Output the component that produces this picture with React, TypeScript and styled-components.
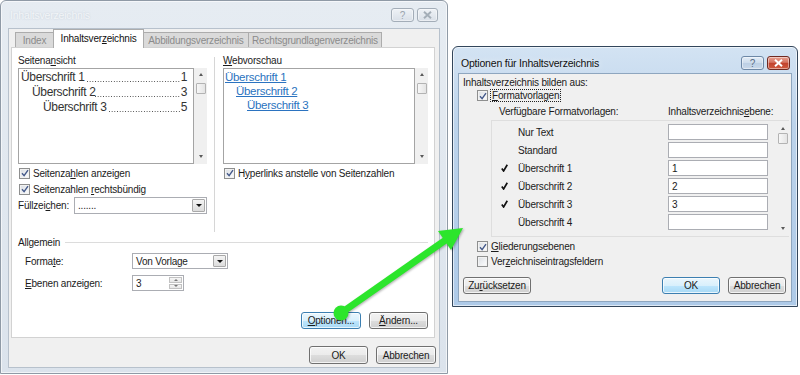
import styled, { createGlobalStyle } from 'styled-components';

const GlobalStyle = createGlobalStyle`
  html, body {
    margin: 0;
    padding: 0;
    background: #ffffff;
  }
  body {
    font-family: "Liberation Sans", Arial, sans-serif;
    font-size: 10px;
    letter-spacing: -0.2px;
    color: #1b1b1b;
  }
  * {
    box-sizing: border-box;
  }
`;

const Desktop = styled.div`
  position: relative;
  width: 800px;
  height: 375px;
  overflow: hidden;
  background: #ffffff;
`;

type WinProps = { $x: number; $y: number; $w: number; $h: number; $active?: boolean };

const Window = styled.div<WinProps>`
  position: absolute;
  left: ${(p) => p.$x}px;
  top: ${(p) => p.$y}px;
  width: ${(p) => p.$w}px;
  height: ${(p) => p.$h}px;
  display: flex;
  flex-direction: column;
  padding: 0 ${(p) => (p.$active ? 5 : 7)}px ${(p) => (p.$active ? 4 : 5)}px;
  border: 1px solid ${(p) => (p.$active ? '#33465b' : '#8f9aa6')};
  border-radius: 6px 6px 0 0;
  background: ${(p) =>
    p.$active
      ? 'linear-gradient(to bottom, #d3e3f3 0%, #bcd3eb 30%, #aecae8 100%)'
      : 'linear-gradient(to bottom, #e6ecf2 0%, #dbe3ec 100%)'};
  box-shadow: inset 0 0 0 1px rgba(255, 255, 255, 0.6);
`;

const TitleBar = styled.div<{ $active?: boolean }>`
  height: ${(p) => (p.$active ? 26 : 27)}px;
  flex-shrink: 0;
  display: flex;
  align-items: center;
  padding: ${(p) => (p.$active ? '6px 0 0 3px' : '1px 0 0 2px')};
`;

const Title = styled.span<{ $active?: boolean }>`
  flex: 1;
  font-size: 10.5px;
  color: ${(p) => (p.$active ? '#111' : '#f2f5f8')};
  text-shadow: ${(p) => (p.$active ? '0 0 6px rgba(255,255,255,0.9)' : '0 0 2px #c3ccd6')};
`;

const CaptionButtons = styled.div`
  display: flex;
  gap: 3px;
  margin-right: 2px;
`;

const CaptionButton = styled.span<{ $close?: boolean; $active?: boolean; $w: number }>`
  width: ${(p) => p.$w}px;
  height: 14px;
  display: flex;
  align-items: center;
  justify-content: center;
  border-radius: 3px;
  font-size: 10px;
  border: 1px solid
    ${(p) => (!p.$active ? '#a3adb8' : p.$close ? '#6f2a22' : '#6d88a6')};
  color: ${(p) => (p.$active ? '#5a6e85' : '#9aa4ae')};
  background: ${(p) =>
    !p.$active
      ? 'linear-gradient(to bottom, #eef2f6, #d9e0e8)'
      : p.$close
        ? 'linear-gradient(to bottom, #e9a192 0%, #d5725f 45%, #c2412c 50%, #cf5a3f 100%)'
        : 'linear-gradient(to bottom, #e3edf7 0%, #cddcec 50%, #bccfe4 51%, #c9d9ea 100%)'};
  box-shadow: inset 0 0 0 1px rgba(255, 255, 255, 0.45);
`;

const Client = styled.div<{ $active?: boolean }>`
  flex: 1;
  display: flex;
  flex-direction: column;
  background: #f0f0f0;
  border: 1px solid ${(p) => (p.$active ? '#8ea6bf' : '#b7c1cc')};
`;

const U = styled.u`
  text-decoration: underline;
  text-underline-offset: 1px;
`;

/* ---------- tabs ---------- */

const TabStrip = styled.div`
  display: flex;
  align-items: flex-end;
  height: 19px;
  margin-bottom: -1px;
  padding-left: 6px;
  position: relative;
  z-index: 2;
`;

const Tab = styled.div<{ $active?: boolean; $w: number }>`
  width: ${(p) => p.$w}px;
  height: ${(p) => (p.$active ? 19 : 15)}px;
  margin-bottom: ${(p) => (p.$active ? 0 : 1)}px;
  margin-left: -1px;
  display: flex;
  align-items: center;
  justify-content: center;
  padding-bottom: ${(p) => (p.$active ? 1 : 0)}px;
  border: 1px solid #acacac;
  border-bottom: none;
  background: ${(p) => (p.$active ? '#ffffff' : '#dadada')};
  color: ${(p) => (p.$active ? '#111' : '#8b8b8b')};
  position: relative;
  z-index: ${(p) => (p.$active ? 2 : 1)};
  &:first-child {
    margin-left: 0;
  }
`;

const Panel = styled.div`
  height: 291px;
  margin: 0 4px 0 2px;
  padding: 6px 6px 0 6px;
  border: 1px solid #d2d2d2;
  background: #ffffff;
  display: flex;
  flex-direction: column;
`;

const Columns = styled.div`
  display: flex;
  height: 178px;
`;

const Column = styled.div<{ $w: number }>`
  width: ${(p) => p.$w}px;
  display: flex;
  flex-direction: column;
`;

const VSeparator = styled.div`
  width: 1px;
  height: 175px;
  margin: 3px 8px 0 7px;
  background: #d6d6d6;
`;

const FieldLabel = styled.div`
  height: 14px;
  line-height: 14px;
`;

const ListWrap = styled.div`
  height: 96px;
  display: flex;
`;

const ListBox = styled.div`
  flex: 1;
  min-width: 0;
  overflow: hidden;
  border: 1px solid #a4a4a4;
  background: #ffffff;
  padding-top: 1px;
`;

const ScrollTrack = styled.div<{ $w: number; $pt: number; $pb: number }>`
  width: ${(p) => p.$w}px;
  flex-shrink: 0;
  display: flex;
  flex-direction: column;
  align-items: center;
  padding: ${(p) => p.$pt}px 0 ${(p) => p.$pb}px;
  background: #f0f0f0;
`;

const ScrollArrow = styled.span<{ $down?: boolean }>`
  width: 0;
  height: 0;
  border-left: 2.5px solid transparent;
  border-right: 2.5px solid transparent;
  ${(p) => (p.$down ? 'border-top: 3px solid #5a5a5a;' : 'border-bottom: 3px solid #5a5a5a;')}
`;

const ScrollThumb = styled.span<{ $mt: number }>`
  width: 10px;
  height: 11px;
  margin-top: ${(p) => p.$mt}px;
  border: 1px solid #b3b3b3;
  border-radius: 1px;
  background: linear-gradient(to right, #f7f7f7, #e4e4e4);
`;

const ScrollFill = styled.span`
  flex: 1;
`;

const TocEntry = styled.div<{ $indent: number }>`
  display: flex;
  height: 15px;
  line-height: 15px;
  padding: 0 6px 0 ${(p) => p.$indent}px;
  font-size: 12px;
  letter-spacing: -0.35px;
  color: #333;
  white-space: nowrap;
`;

/* dotted tab leader drawn as a repeating 1px dot along the baseline */
const Leader = styled.span`
  flex: 1;
  min-width: 0;
  margin-right: 1px;
  background: linear-gradient(to right, #4a4a4a 1px, transparent 1px) 0 11px / 2.7px 1px repeat-x;
`;

const WebLink = styled.div<{ $indent: number }>`
  height: 14px;
  line-height: 14px;
  padding-left: ${(p) => p.$indent}px;
  font-size: 11.5px;
  letter-spacing: -0.3px;
  color: #2b73c0;
  text-decoration: underline;
`;

const CheckRow = styled.div<{ $h: number; $mt?: number; $ml?: number }>`
  display: flex;
  align-items: center;
  gap: 3px;
  height: ${(p) => p.$h}px;
  margin-top: ${(p) => p.$mt ?? 0}px;
  padding-left: ${(p) => p.$ml ?? 1}px;
  white-space: nowrap;
`;

const CheckBoxBox = styled.span`
  width: 11px;
  height: 11px;
  flex-shrink: 0;
  display: inline-flex;
  align-items: center;
  justify-content: center;
  border: 1px solid #8e8f8f;
  background: linear-gradient(135deg, #d9dde2 0%, #f7f8f9 80%);
  box-shadow: inset 0 0 0 1px #f2f2f2;
`;

const FocusText = styled.span`
  outline: 1px dotted #222;
  outline-offset: 0;
  padding: 0 1px;
`;

const FormRow = styled.div<{ $h: number; $mt?: number; $pl?: number }>`
  display: flex;
  align-items: center;
  height: ${(p) => p.$h}px;
  margin-top: ${(p) => p.$mt ?? 0}px;
  padding-left: ${(p) => p.$pl ?? 0}px;
`;

const RowLabel = styled.span<{ $w: number }>`
  width: ${(p) => p.$w}px;
  flex-shrink: 0;
`;

const Combo = styled.div<{ $w: number; $h: number }>`
  width: ${(p) => p.$w}px;
  height: ${(p) => p.$h}px;
  display: flex;
  align-items: stretch;
  border: 1px solid #abadb3;
  background: #ffffff;
`;

const ComboValue = styled.span`
  flex: 1;
  display: flex;
  align-items: center;
  padding-left: 3px;
`;

const ComboButton = styled.span`
  width: 13px;
  margin: 1px;
  display: flex;
  align-items: center;
  justify-content: center;
  border: 1px solid #a9a9a9;
  border-radius: 1px;
  background: linear-gradient(to bottom, #f4f4f4, #dcdcdc);
`;

const DownTriangle = styled.span`
  width: 0;
  height: 0;
  border-left: 3px solid transparent;
  border-right: 3px solid transparent;
  border-top: 3px solid #111;
`;

const SpinButtons = styled.span`
  width: 13px;
  margin: 1px;
  display: flex;
  flex-direction: column;
  gap: 1px;
`;

const SpinButton = styled.span`
  flex: 1;
  display: flex;
  align-items: center;
  justify-content: center;
  border: 1px solid #c2c2c2;
  background: linear-gradient(to bottom, #f6f6f6, #e6e6e6);
`;

const GroupHeader = styled.div`
  display: flex;
  align-items: center;
  height: 14px;
  margin-top: 3px;
  &::after {
    content: '';
    flex: 1;
    height: 1px;
    margin-left: 5px;
    background: #dcdcdc;
  }
`;

const ButtonRow = styled.div<{ $mt: number; $pr?: number; $pl?: number }>`
  display: flex;
  align-items: center;
  gap: 8px;
  margin-top: ${(p) => p.$mt}px;
  padding: 0 ${(p) => p.$pr ?? 0}px 0 ${(p) => p.$pl ?? 0}px;
`;

const Spacer = styled.span`
  flex: 1;
`;

const Button = styled.span<{ $w: number; $h: number; $primary?: boolean }>`
  width: ${(p) => p.$w}px;
  height: ${(p) => p.$h}px;
  display: inline-flex;
  align-items: center;
  justify-content: center;
  border-radius: 3px;
  border: 1px solid ${(p) => (p.$primary ? '#3c7fb1' : '#707070')};
  background: ${(p) =>
    p.$primary
      ? 'linear-gradient(to bottom, #eaf6fd 0%, #d9f0fc 50%, #bee6fd 51%, #a7d9f5 100%)'
      : 'linear-gradient(to bottom, #f2f2f2 0%, #ebebeb 50%, #dddddd 51%, #cfcfcf 100%)'};
  box-shadow: inset 0 0 0 1px rgba(255, 255, 255, 0.75);
  color: #1b1b1b;
`;

/* ---------- options dialog ---------- */

const OptionsBody = styled.div`
  flex: 1;
  display: flex;
  flex-direction: column;
  padding: 3px 5px 0 4px;
`;

const Line = styled.div<{ $h: number; $mt?: number; $pl?: number }>`
  height: ${(p) => p.$h}px;
  line-height: ${(p) => p.$h}px;
  margin-top: ${(p) => p.$mt ?? 0}px;
  padding-left: ${(p) => p.$pl ?? 0}px;
  display: flex;
`;

const StyleList = styled.div`
  height: 117px;
  margin: 1px 0 0 28px;
  width: 298px;
  display: flex;
  border: 1px solid #dedede;
  border-right: none;
`;

const StyleRows = styled.div`
  flex: 1;
  padding-top: 2px;
`;

const StyleRow = styled.div`
  height: 18px;
  display: flex;
  align-items: center;
`;

const MarkCell = styled.span`
  width: 26px;
  padding-left: 9px;
  display: flex;
  align-items: center;
`;

const TextBox = styled.span`
  width: 100px;
  height: 16px;
  display: flex;
  align-items: center;
  padding-left: 3px;
  border: 1px solid #abadb3;
  background: #ffffff;
`;

const Overlay = styled.svg`
  position: absolute;
  left: 0;
  top: 0;
  z-index: 10;
  pointer-events: none;
  filter: drop-shadow(1px 1px 1px rgba(0, 0, 0, 0.3));
`;

const Check = () => (
  <svg width="8" height="8" viewBox="0 0 8 8">
    <path d="M1 4.3 L3.1 6.6 L7 1.2" stroke="#44598a" strokeWidth="1.4" fill="none" />
  </svg>
);

const CheckBox = ({ checked }: { checked?: boolean }) => (
  <CheckBoxBox>{checked && <Check />}</CheckBoxBox>
);

const Tick = () => (
  <svg width="7" height="8" viewBox="0 0 7 8">
    <path d="M0.8 4.6 L2.6 7 L6.3 0.8" stroke="#111" strokeWidth="1.7" fill="none" />
  </svg>
);

const CloseGlyph = ({ color }: { color: string }) => (
  <svg width="9" height="8" viewBox="0 0 9 8">
    <path d="M1 0.8 L8 7.2 M8 0.8 L1 7.2" stroke={color} strokeWidth="2" />
  </svg>
);

const SmallUp = styled.span`
  width: 0;
  height: 0;
  border-left: 2px solid transparent;
  border-right: 2px solid transparent;
  border-bottom: 2px solid #777;
`;

const SmallDown = styled(SmallUp)`
  border-bottom: none;
  border-top: 2px solid #777;
`;

const styleRows = [
  { name: 'Nur Text', level: '', marked: false },
  { name: 'Standard', level: '', marked: false },
  { name: 'Überschrift 1', level: '1', marked: true },
  { name: 'Überschrift 2', level: '2', marked: true },
  { name: 'Überschrift 3', level: '3', marked: true },
  { name: 'Überschrift 4', level: '', marked: false },
];

const App = () => {
  return (
    <Desktop>
      <GlobalStyle />

      <Window $x={0} $y={0} $w={448} $h={374}>
        <TitleBar>
          <Title>Inhaltsverzeichnis</Title>
          <CaptionButtons>
            <CaptionButton $w={23}>?</CaptionButton>
            <CaptionButton $w={21} $close>
              <CloseGlyph color="#a4aeb8" />
            </CaptionButton>
          </CaptionButtons>
        </TitleBar>
        <Client>
          <TabStrip>
            <Tab $w={39}>Index</Tab>
            <Tab $w={91} $active>
              <span>
                Inhaltsver<U>z</U>eichnis
              </span>
            </Tab>
            <Tab $w={106}>Abbildungsverzeichnis</Tab>
            <Tab $w={134}>Rechtsgrundlagenverzeichnis</Tab>
          </TabStrip>
          <Panel>
            <Columns>
              <Column $w={189}>
                <FieldLabel>
                  Seitena<U>n</U>sicht
                </FieldLabel>
                <ListWrap>
                  <ListBox>
                    <TocEntry $indent={2}>
                      <span>Überschrift 1&nbsp;</span>
                      <Leader />
                      <span>1</span>
                    </TocEntry>
                    <TocEntry $indent={13}>
                      <span>Überschrift 2</span>
                      <Leader />
                      <span>3</span>
                    </TocEntry>
                    <TocEntry $indent={24}>
                      <span>Überschrift 3&nbsp;</span>
                      <Leader />
                      <span>5</span>
                    </TocEntry>
                  </ListBox>
                  <ScrollTrack $w={13} $pt={5} $pb={6}>
                    <ScrollArrow />
                    <ScrollThumb $mt={7} />
                    <ScrollFill />
                    <ScrollArrow $down />
                  </ScrollTrack>
                </ListWrap>
                <CheckRow $h={16} $mt={1}>
                  <CheckBox checked />
                  <span>
                    Seitenza<U>h</U>len anzeigen
                  </span>
                </CheckRow>
                <CheckRow $h={16}>
                  <CheckBox checked />
                  <span>
                    Seitenzahlen <U>r</U>echtsbündig
                  </span>
                </CheckRow>
                <FormRow $h={17}>
                  <RowLabel $w={56}>
                    Füllzei<U>c</U>hen:
                  </RowLabel>
                  <Combo $w={133} $h={17}>
                    <ComboValue>.......</ComboValue>
                    <ComboButton>
                      <DownTriangle />
                    </ComboButton>
                  </Combo>
                </FormRow>
              </Column>
              <VSeparator />
              <Column $w={205}>
                <FieldLabel>
                  <U>W</U>ebvorschau
                </FieldLabel>
                <ListWrap>
                  <ListBox>
                    <WebLink $indent={1}>Überschrift 1</WebLink>
                    <WebLink $indent={12}>Überschrift 2</WebLink>
                    <WebLink $indent={23}>Überschrift 3</WebLink>
                  </ListBox>
                  <ScrollTrack $w={13} $pt={5} $pb={6}>
                    <ScrollArrow />
                    <ScrollThumb $mt={7} />
                    <ScrollFill />
                    <ScrollArrow $down />
                  </ScrollTrack>
                </ListWrap>
                <CheckRow $h={16} $mt={1}>
                  <CheckBox checked />
                  <span>
                    H<U>y</U>perlinks anstelle von Seitenzahlen
                  </span>
                </CheckRow>
              </Column>
            </Columns>

            <GroupHeader>Allgemein</GroupHeader>
            <FormRow $h={18} $mt={3} $pl={7}>
              <RowLabel $w={107}>
                Forma<U>t</U>e:
              </RowLabel>
              <Combo $w={96} $h={16}>
                <ComboValue>Von Vorlage</ComboValue>
                <ComboButton>
                  <DownTriangle />
                </ComboButton>
              </Combo>
            </FormRow>
            <FormRow $h={18} $mt={4} $pl={7}>
              <RowLabel $w={107}>
                <U>E</U>benen anzeigen:
              </RowLabel>
              <Combo $w={52} $h={16}>
                <ComboValue>3</ComboValue>
                <SpinButtons>
                  <SpinButton>
                    <SmallUp />
                  </SpinButton>
                  <SpinButton>
                    <SmallDown />
                  </SpinButton>
                </SpinButtons>
              </Combo>
            </FormRow>
            <ButtonRow $mt={20}>
              <Spacer />
              <Button $w={60} $h={17} $primary>
                <span>
                  <U>O</U>ptionen...
                </span>
              </Button>
              <Button $w={59} $h={17}>
                <span>
                  <U>Ä</U>ndern...
                </span>
              </Button>
            </ButtonRow>
          </Panel>
          <ButtonRow $mt={8} $pr={3}>
            <Spacer />
            <Button $w={59} $h={18}>
              OK
            </Button>
            <Button $w={60} $h={18}>
              Abbrechen
            </Button>
          </ButtonRow>
        </Client>
      </Window>

      <Window $x={452} $y={46} $w={346} $h={261} $active>
        <TitleBar $active>
          <Title $active>Optionen für Inhaltsverzeichnis</Title>
          <CaptionButtons>
            <CaptionButton $w={23} $active>
              ?
            </CaptionButton>
            <CaptionButton $w={23} $active $close>
              <CloseGlyph color="#ffffff" />
            </CaptionButton>
          </CaptionButtons>
        </TitleBar>
        <Client $active>
          <OptionsBody>
            <Line $h={12}>Inhaltsverzeichnis bilden aus:</Line>
            <CheckRow $h={13} $ml={14}>
              <CheckBox checked />
              <FocusText>
                <U>F</U>ormatvorlagen
              </FocusText>
            </CheckRow>
            <Line $h={14} $mt={3} $pl={36}>
              <RowLabel $w={169}>Verfügbare Formatvorlagen:</RowLabel>
              <span>
                Inhaltsverzeichnis<U>e</U>bene:
              </span>
            </Line>
            <StyleList>
              <StyleRows>
                {styleRows.map((row) => (
                  <StyleRow key={row.name}>
                    <MarkCell>{row.marked && <Tick />}</MarkCell>
                    <RowLabel $w={150}>{row.name}</RowLabel>
                    <TextBox>{row.level}</TextBox>
                  </StyleRow>
                ))}
              </StyleRows>
              <ScrollTrack $w={12} $pt={6} $pb={6}>
                <ScrollArrow />
                <ScrollThumb $mt={3} />
                <ScrollFill />
                <ScrollArrow $down />
              </ScrollTrack>
            </StyleList>
            <CheckRow $h={15} $mt={2} $ml={14}>
              <CheckBox checked />
              <span>
                <U>G</U>liederungsebenen
              </span>
            </CheckRow>
            <CheckRow $h={15} $ml={14}>
              <CheckBox />
              <span>
                Ver<U>z</U>eichniseintragsfeldern
              </span>
            </CheckRow>
            <ButtonRow $mt={8}>
              <Button $w={68} $h={17}>
                <span>
                  Zu<U>r</U>ücksetzen
                </span>
              </Button>
              <Spacer />
              <Button $w={58} $h={17} $primary>
                OK
              </Button>
              <Button $w={58} $h={17}>
                Abbrechen
              </Button>
            </ButtonRow>
          </OptionsBody>
        </Client>
      </Window>

      <Overlay width={800} height={375} viewBox="0 0 800 375">
        <line x1={341} y1={313} x2={447} y2={239} stroke="#2ce52c" strokeWidth={7} />
        <circle cx={341} cy={313} r={7.5} fill="#2ce52c" />
        <polygon points="463,228 451,250 438,231" fill="#2ce52c" />
      </Overlay>
    </Desktop>
  );
};

export default App;
